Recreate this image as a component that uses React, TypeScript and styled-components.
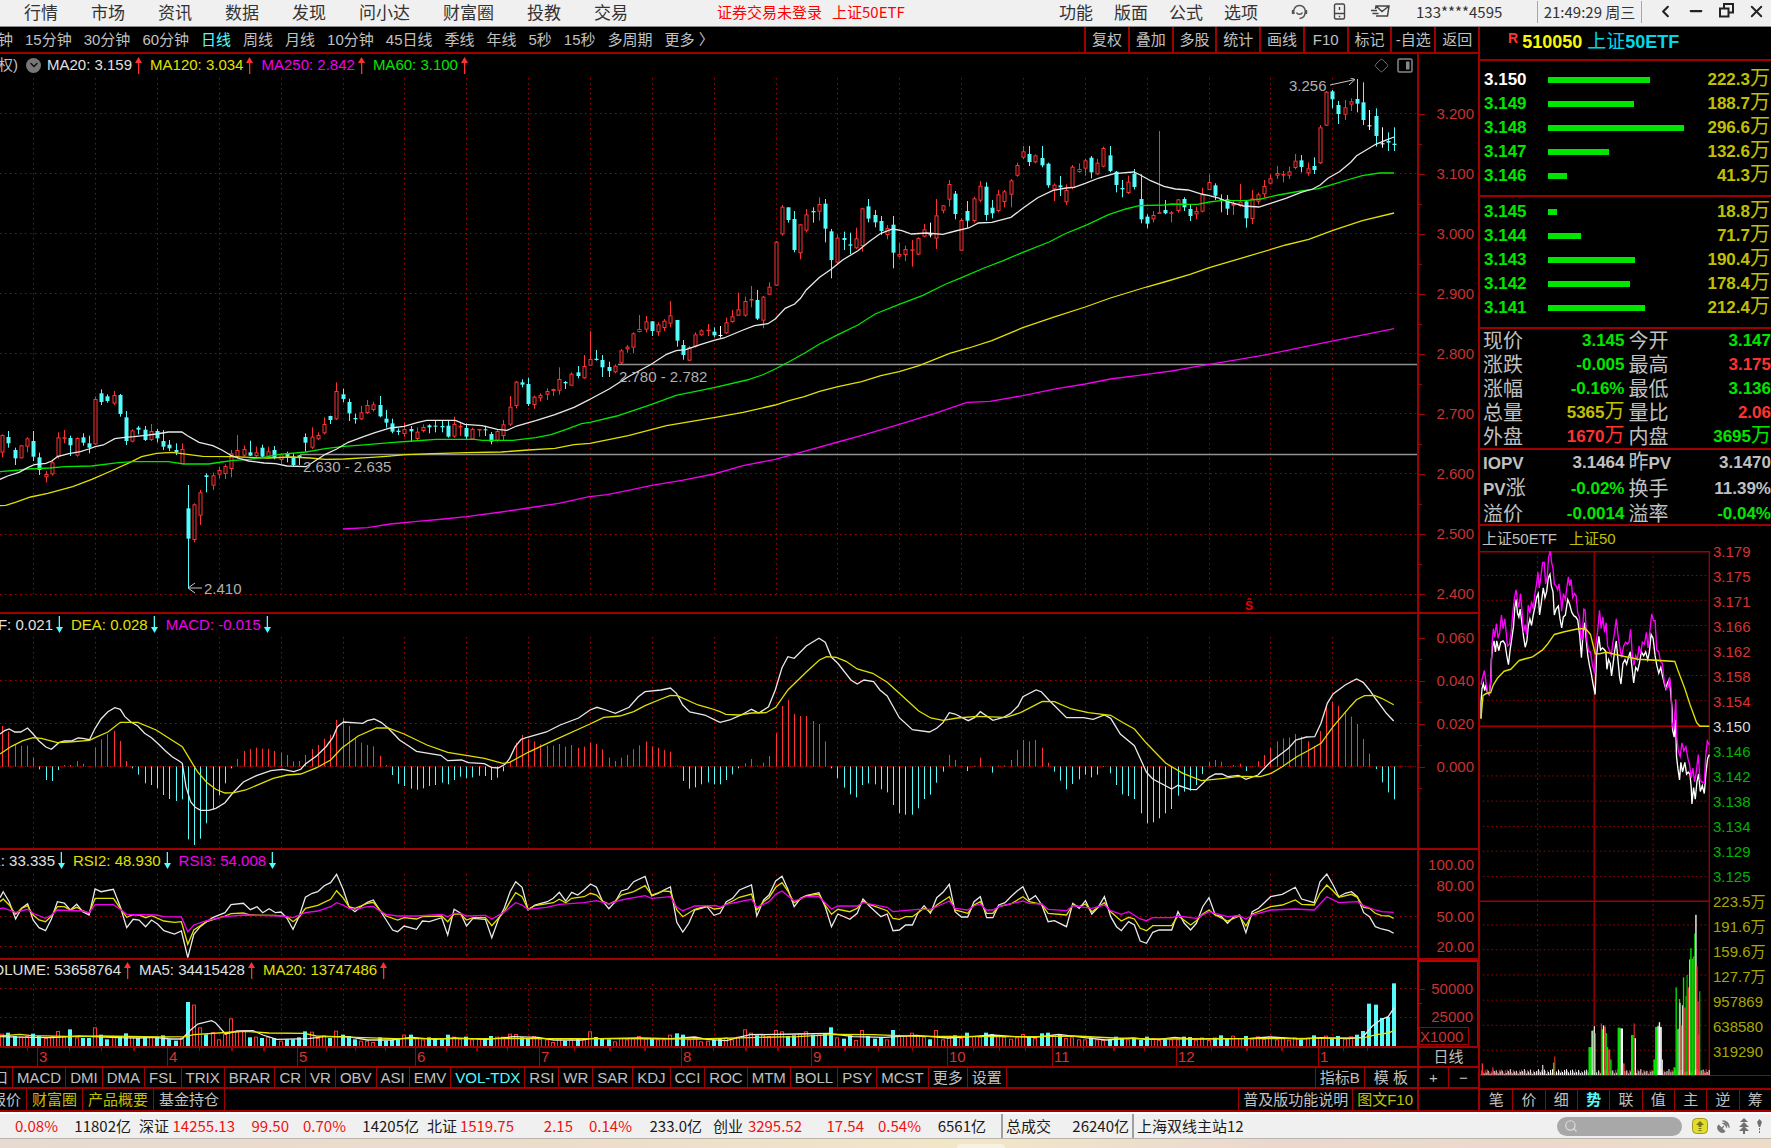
import React from "react";
import styled, { createGlobalStyle } from "styled-components";
import { ChevronLeft, Minus, X, Search, ChevronDown, Diamond, SatelliteDish } from "lucide-react";

const LINE = "#a00000";
const RED = "#ff3232";
const CYAN = "#54fcfc";
const GREEN = "#00e600";
const YELLOW = "#c0c000";
const MAGENTA = "#f000f0";
const GREY = "#c0c0c0";
const AXIS = 61;
const SIDE = 291;

const latin = `"Liberation Sans", "Noto Sans CJK SC", sans-serif`;
const ui = `"Noto Sans CJK SC", "Noto Sans", sans-serif`;

const Global = createGlobalStyle`
  * { box-sizing: border-box; }
  body { margin: 0; background: #000; overflow-x: hidden; }
  button, input { font: inherit; color: inherit; background: none; border: 0; padding: 0; margin: 0; }
  button { cursor: pointer; white-space: nowrap; }
  table { border-collapse: collapse; border-spacing: 0; }
  th, td { padding: 0; text-align: left; font-weight: inherit; }
`;

/* ---------- data ---------- */

type Section = { x: number; y: number; k: number; pts: string };

const A = { x: 0, y: 300, k: 2.6133 };
const B = { x: 590, y: 0, k: 2.6133 };
const B2 = { x: 590, y: 200, k: 2.6133 };
const C = { x: 1171, y: 0, k: 2.6133 };
const M1 = { x: 0, y: 600, k: 2.1778 };
const M2 = { x: 720, y: 600, k: 2.0632 };
const V1 = { x: 0, y: 940, k: 2.529 };
const V2 = { x: 600, y: 940, k: 2.529 };
const V3 = { x: 1151, y: 940, k: 2.529 };

const path = (sections: Section[]) =>
  sections
    .flatMap((s) =>
      s.pts.split(" ").map((p) => {
        const [px, py] = p.split(",").map(Number);
        return `${(s.x + px / s.k).toFixed(1)},${(s.y + py / 3).toFixed(1)}`;
      })
    )
    .join(" ");

const barX = (n: number) => 2.3 + 6.186 * n;

type Candle = { kind: string; high: number; low: number; top: number; bottom: number };

const readCandles = (base: number, text: string): Candle[] =>
  text
    .trim()
    .split(/\s*\|\s*/)
    .map((row) => {
      const [kind, ...v] = row.split(" ");
      const [high, low, top, bottom] = v.map((n) => base + Number(n) / 3);
      return { kind, high, low, top, bottom };
    });

const candles: Candle[] = [
  ...readCandles(300, `r 403 472 405 458|c 393 443 411 430|c 443 495 450 475|r 435 475 436 475|r 412 457 415 440|c 393 483 423 470|c 458 525 472 510|r 513 547 522 532|r 483 527 487 523|r 397 475 412 470|r 390 430 412 416|c 407 468 414 436|r 412 470 414 467|c 400 437 412 428|c 407 460 430 443|r 290 435 297 433|c 268 315 280 306|c 283 308 289 303|r 273 315 285 311|c 282 350 285 342|c 333 435 352 423|r 388 427 391 425|c 378 403 383 389|c 378 423 389 420|r 372 423 393 420|c 387 427 393 415|c 390 450 423 440|c 420 453 434 445|c 430 465 450 457|r 430 493 447 492|c 555 865 625 716|r 610 727 613 720|r 570 675 577 647|c 520 577 526 531|r 518 570 526 557|r 500 535 510 524|r 493 537 498 522|r 450 532 460 507|r 405 477 450 470|r 437 470 447 467|c 422 468 457 467|r 440 470 457 468|c 434 473 443 470|r 440 472 454 470|c 438 478 450 473|r 460 492 463 480|c 455 487 460 470|c 460 500 470 495|c 465 495 466 473|c 400 455 411 428|r 382 447 410 443|r 397 420 405 418|r 352 403 372 400|c 347 372 348 360|r 247 360 273 358|c 266 307 283 297|c 296 363 306 340|c 341 371 354 358|r 318 360 337 358|r 300 342 315 339|r 305 335 313 330|c 288 352 315 349|c 330 383 356 368|c 356 400 370 395|c 385 405 392 396|r 367 410 387 402|c 378 425 387 394|r 382 422 395 417|r 373 397 381 393|c 373 400 376 382|c 363 397 377 380|c 363 397 378 382|c 363 413 377 410|r 350 413 372 410|r 365 408 378 382|c 370 418 384 410|r 383 420 387 418|r 387 410 387 391|c 377 408 388 391|c 396 433 402 425|r 390 425 393 422|r 360 422 373 408|r 288 378 320 374|r 243 325 245 318|c 238 262 247 254|c 233 318 252 312|r 287 326 290 315|r 280 304 285 295|r 265 300 273 284|r 266 288 267 273|r 202 284 237 272|c 243 267 246 250|r 217 258 221 257|c 198 235 217 228|r 165 236 198 235|r 93 198 177 197|c 150 182 176 180`),
  ...readCandles(200, `c 465 531 480 502|c 485 531 501 513|r 493 520 497 517|r 447 492 451 490|r 435 458 440 448|r 397 460 400 443|r 345 397 387 396|r 348 397 364 389|c 363 408 364 393|r 367 407 373 397|r 357 393 362 384|r 303 382 346 371|c 360 440 360 422|c 420 479 435 465|r 438 483 442 482|r 397 443 403 440|r 388 407 391 406|r 372 408 389 391|c 382 412 395 406|w 378 413 405 407|r 353 402 367 400|r 330 368 349 366|r 278 347 328 347|r 290 350 303 347|r 258 322 297 300|c 270 360 300 356|r 288 385 290 362|r 247 285 260 284|r 123 258 125 257`),
  ...readCandles(0, `r 615 707 620 703|c 622 668 622 660|c 633 757 657 750|r 672 778 673 760|r 627 697 643 692|c 622 668 633 637|r 592 662 612 635|c 597 727 611 686|c 687 835 694 780|r 703 792 713 788|c 695 750 714 720|c 698 762 733 737|r 683 747 715 745|r 623 755 625 738|c 597 667 619 656|c 630 682 645 667|c 648 705 663 693|r 675 718 684 705|c 648 805 674 758|r 728 773 762 770|r 737 783 747 765|r 720 800 748 752|r 712 765 714 764|r 672 712 688 710|w 668 712 703 706|r 597 747 646 716|r 615 640 616 632|r 540 620 552 599|c 573 658 581 642|r 655 752 660 752|c 603 683 633 662|r 590 668 595 663|r 543 607 557 602|c 547 662 560 645|c 600 655 623 640|r 570 637 583 633|r 570 622 574 606|r 537 622 541 584|r 488 530 495 527|r 438 477 454 473|c 438 498 462 486|r 463 490 466 487|c 438 502 474 496|c 488 563 491 556|r 550 603 554 568|c 528 588 556 562|r 553 615 570 607|r 495 568 500 563|r 490 518 507 516|r 477 527 481 506|c 468 535 473 517|r 477 525 488 523|r 440 502 444 500|c 438 517 466 513|c 513 577 515 555|c 540 592 564 568|r 527 582 545 579|c 507 568 521 561|c 523 670 597 658|c 643 685 650 671|r 633 667 645 658|r 393 640 637 640|c 600 643 630 640|r 633 667 637 641|r 597 638 598 633|c 592 633 597 622|c 615 663 627 648|r 620 658 633 643|r 563 637 583 635|r 523 570 546 570|c 550 600 556 587|c 583 637 597 601|c 585 645 598 626|r 600 645 612 617|r 552 620 605 618|c 603 683 604 655|r 570 672 595 657|r 578 613 583 605|r 540 592 558 583|r 523 553 535 551|r 498 537 519 527|r 513 547 522 525|r 500 537 514 527|r 462 508 482 504|c 465 517 481 501|r 487 527 505 520|c 472 522 498 510|r 375 492 382 490|r 273 378 275 377|c 270 325 274 298|c 303 372 315 342|r 300 360 322 344|r 295 333 304 314|c 237 337 297 311|c 247 375 307 360|w 330 390 376 379|c 325 440 348 408|w 382 443 430 432|c 397 453 423 428|c 382 453 431 435`),
];

const ma20 = path([
  { ...A, pts: "0,538 20,528 50,517 72,503 90,494 120,490 135,483 150,470 180,461 210,455 232,447 249,440 270,435 300,416 320,413 350,410 380,406 409,402 440,396 475,396 490,407 520,427 556,437 580,450 605,467 630,477 650,483 690,489 720,491 750,498 800,500 830,478 850,463 880,447 910,427 950,410 980,398 1020,384 1056,379 1090,368 1115,361 1190,361 1215,373 1260,377 1300,388 1325,391 1350,378 1400,362 1450,344 1500,322 1540,299" },
  { ...B2, pts: "0,598 50,567 100,530 161,492 200,463 225,452 250,449 290,433 324,421 350,414 400,390 430,377 465,371 484,357 510,325 535,312 550,295 565,270 600,232 631,207 660,180 700,152 729,125 760,100 791,87" },
  { ...B, pts: "815,692 840,702 880,699 922,703 955,693 990,684 1015,669 1050,667 1100,652 1131,625 1170,593 1210,571 1245,564 1265,562 1294,550 1330,534 1370,521 1421,516 1438,525 1465,542 1500,559 1530,567" },
  { ...C, pts: "45,570 80,582 100,587 125,594 150,606 190,618 230,621 260,610 300,595 340,577 370,567 390,555 410,535 440,515 470,487 485,467 510,450 535,433 560,421 583,411" },
]);
const ma60 = path([
  { ...A, pts: "0,515 50,510 72,507 130,504 170,500 240,498 310,488 350,485 440,485 480,492 545,492 580,486 605,482 650,478 690,472 730,463 800,456 850,446 900,439 960,434 1020,428 1080,423 1140,418 1240,418 1260,421 1340,421 1400,413 1440,404 1480,388 1520,371" },
  { ...B2, pts: "0,667 70,648 161,613 225,586 324,563 410,540 450,525 484,507 520,485 560,460 600,432 648,404 700,375 745,342 808,313 870,286 930,252 971,233 1030,204 1080,182 1131,157 1200,126 1240,102 1300,74 1355,44 1400,27 1435,17 1500,15 1520,12" },
  { ...C, pts: "50,613 70,613 100,606 130,602 200,601 235,597 280,585 340,573 385,566 423,553 460,540 500,527 545,519 583,519" },
]);
const ma120 = path([
  { ...A, pts: "0,617 15,616 40,607 80,591 125,580 190,560 240,538 290,513 340,487 370,470 409,460 450,457 490,463 530,469 605,470 700,474 760,471 810,474 850,478 900,477 960,473 1010,469 1060,464 1130,461 1219,458 1310,456 1380,450 1450,445 1500,434" },
  { ...B2, pts: "0,730 100,707 200,677 324,653 400,637 484,615 520,602 560,590 600,574 648,560 710,545 760,527 808,515 860,497 940,460 990,444 1050,422 1131,383 1210,352 1294,321 1360,294 1454,261 1510,243" },
  { ...C, pts: "50,823 100,803 200,769 300,735 360,718 423,691 500,662 583,639" },
]);
const ma250 = path([
  { ...A, pts: "896,687 960,683 1020,672 1090,664 1160,657 1219,650 1310,636 1380,624 1460,610 1540,590" },
  { ...B2, pts: "0,890 45,884 100,871 161,856 240,841 324,822 400,797 484,778 550,757 648,726 720,703 808,673 900,641 985,607 1045,604 1131,587 1220,566 1294,552 1360,537 1454,523 1520,513 1568,503" },
  { ...C, pts: "240,1066 392,1030 583,986" },
]);

const macdEnds = "378 395 435 437 437 472 508 540 543 510 495 495 483 491 498 442 418 402 393 423 483 505 524 550 555 565 585 597 603 598 718 735 716 670 628 586 550 505 477 453 447 443 446 446 453 458 465 484 483 465 447 435 416 404 360 354 378 415 428 435 439 467 495 525 551 558 566 569 565 558 555 548 553 540 530 535 532 527 528 540 533 514 485 428 405 418 424 433 437 437 432 440 435 443 440 428 432 448 473 483 473 465 448 436 424 439 443 450 455 497 543 566 562 553 547 553 553 540 523 505 490 477 497 488 468 400 318 300 342 348 348 363 372 424 505 535 563 583 592 555 550 553 568 577 615 640 644 644 625 597 584 548 515 465 480 497 513 497 473 499 518 497 496 480 450 420 424 420 443 488 515 542 568 552 538 524 532 524 501 520 555 583 588 597 640 670 667 655 640 627 587 575 572 555 522 485 480 485 498 495 491 513 498 484 465 443 424 415 412 402 410 424 437 393 318 305 318 333 350 372 417 461 507 547 577 598"
  .split(" ")
  .map((v) => 600 + Number(v) / 3);

const dif = path([
  { ...M1, pts: "0,402 10,392 20,387 32,396 45,396 60,384 72,402 85,423 100,441 112,448 128,428 140,423 155,423 170,414 180,415 195,419 207,385 220,357 235,335 250,323 262,328 272,350 285,366 300,378 315,400 330,413 345,432 360,452 375,470 390,483 397,490 405,560 415,605 425,622 437,631 455,631 470,625 490,608 505,582 530,546 560,526 590,512 615,508 640,515 655,508 665,492 690,467 710,440 725,412 735,380 748,366 790,370 800,362 815,357 830,367 845,384 860,405 870,420 890,438 907,454 960,466 975,482 1005,480 1020,488 1055,491 1070,502 1085,504 1100,493 1110,475 1122,440 1135,418 1150,411 1190,396 1220,375 1260,354 1285,330 1300,322 1320,330 1340,340 1370,322 1390,290 1405,275 1440,270 1460,264 1473,280 1487,315 1502,336 1535,345 1560,362" },
  { ...M2, pts: "0,367 20,360 45,344 65,328 80,339 100,320 114,270 128,203 140,170 153,175 178,138 204,115 217,127 230,172 243,190 270,240 283,252 297,240 317,245 330,270 345,288 370,353 397,389 432,396 447,385 460,368 473,338 485,342 512,362 525,353 537,335 563,361 585,352 600,340 615,318 625,290 652,270 663,275 680,302 715,353 750,353 770,358 793,345 806,355 826,402 855,437 870,485 880,517 893,537 932,567 945,556 970,568 983,569 1009,532 1022,522 1036,522 1047,530 1070,526 1085,538 1110,525 1135,487 1173,445 1188,420 1210,411 1227,410 1240,370 1253,310 1265,282 1290,255 1313,237 1327,247 1340,270 1353,297 1375,340 1390,363" },
]);
const dea = path([
  { ...M1, pts: "0,462 25,439 50,422 72,413 90,415 125,428 150,426 195,421 207,413 235,396 262,367 300,367 340,390 380,425 397,440 410,470 430,515 450,547 470,568 490,579 510,578 535,570 595,535 625,525 655,522 690,503 720,480 745,443 780,408 820,384 845,384 880,402 930,435 975,457 1055,475 1095,490 1110,487 1150,457 1200,425 1285,372 1315,352 1350,348 1380,335 1405,317 1440,297 1460,286 1475,287 1520,315 1545,324" },
  { ...M2, pts: "0,335 12,343 40,345 65,339 95,338 115,322 140,270 178,216 205,180 220,170 240,172 260,184 283,207 315,220 345,247 370,280 410,333 435,354 460,361 490,354 530,349 590,352 620,338 665,304 690,305 725,327 760,338 806,346 830,367 855,387 880,430 920,490 955,520 993,542 1040,535 1070,529 1115,530 1137,520 1160,500 1190,470 1215,451 1240,430 1265,380 1300,320 1313,299 1330,287 1350,286 1365,295 1390,314" },
]);

const rsi1 = path([
  { ...M1, pts: "0,893 7,875 20,905 34,957 47,925 60,911 72,960 85,983 99,992 112,957 125,905 140,909 153,930 167,913 180,935 194,945 207,867 220,875 247,868 262,920 276,983 290,958 303,960 317,980 330,960 343,972 357,992 380,1002 395,993 409,1073 422,1003 436,980 450,965 463,953 490,938 503,914 530,910 545,929 560,920 572,938 586,926 600,938 612,936 625,955 638,988 652,947 665,892 680,880 692,875 706,857 720,848 733,823 747,867 760,920 773,935 788,918 800,907 813,900 827,930 841,960 855,990 866,995 880,978 907,988 920,963 935,965 962,953 975,1005 989,928 1003,940 1016,978 1030,955 1057,958 1071,1013 1085,960 1098,925 1111,875 1123,845 1137,862 1150,930 1165,915 1192,905 1205,895 1218,877 1232,903 1245,877 1258,885 1272,870 1286,852 1299,862 1312,903 1326,926 1340,905 1353,873 1367,867 1380,845 1405,829 1419,888 1433,880 1446,870 1460,861 1474,967 1487,996 1500,970 1513,930 1540,920 1555,946" },
  { ...M2, pts: "0,940 13,905 26,895 40,870 65,855 76,948 90,900 101,885 115,843 128,829 140,868 153,920 166,895 178,887 204,878 217,920 230,980 243,942 268,958 283,940 295,897 308,918 332,950 345,942 357,992 370,990 383,975 397,975 408,940 421,917 434,940 447,893 460,877 473,853 485,935 498,951 511,951 524,905 537,890 550,953 563,953 575,915 588,908 600,890 613,873 625,860 638,900 651,887 664,915 677,965 690,962 715,980 728,910 741,925 754,902 767,942 780,922 793,890 806,950 818,980 828,992 843,965 855,975 867,1023 880,1030 893,997 906,990 932,990 945,935 958,970 971,990 983,970 996,920 1009,893 1022,945 1035,950 1047,970 1060,950 1072,945 1085,998 1098,935 1111,925 1123,908 1136,890 1160,883 1187,862 1200,897 1226,908 1238,845 1252,822 1265,855 1277,890 1290,880 1303,875 1315,890 1328,938 1340,950 1352,980 1365,987 1380,992 1390,1000" },
]);
const rsi2 = path([
  { ...M1, pts: "0,905 7,897 20,915 34,943 47,925 60,917 72,945 85,960 99,965 112,948 125,920 140,920 153,930 167,922 180,932 194,940 207,895 247,895 262,925 276,952 290,944 303,945 317,953 330,947 357,963 380,967 395,965 409,1033 422,990 450,965 490,948 503,941 530,939 545,945 600,946 625,950 638,965 652,950 665,925 692,916 720,898 733,872 747,893 760,920 773,925 800,910 813,907 827,930 841,948 866,960 880,953 907,957 920,950 962,948 975,965 989,942 1003,942 1016,960 1030,953 1057,953 1071,977 1098,935 1111,905 1123,878 1137,890 1150,928 1165,917 1205,908 1218,898 1232,908 1245,895 1272,890 1286,880 1299,885 1312,903 1326,912 1340,903 1353,885 1380,875 1405,857 1419,885 1446,873 1460,875 1474,930 1487,950 1513,928 1540,918 1555,927" },
  { ...M2, pts: "0,925 13,912 26,903 40,892 65,882 76,930 90,905 101,893 115,862 128,848 140,873 153,908 178,887 204,883 217,915 230,943 243,928 268,935 283,925 295,903 308,913 345,932 357,955 370,958 383,950 397,950 421,925 434,935 447,915 473,890 485,930 511,940 524,915 537,905 550,940 563,940 575,920 600,912 625,890 638,905 664,913 677,940 715,945 728,915 741,920 754,912 767,935 793,908 806,935 828,963 843,952 855,957 867,985 880,992 893,977 932,977 945,947 971,975 983,962 996,942 1009,930 1022,945 1047,963 1072,948 1085,978 1098,942 1136,920 1160,915 1187,900 1200,913 1226,915 1238,880 1252,855 1265,873 1277,892 1303,883 1315,892 1328,922 1340,925 1352,940 1365,947 1380,948 1390,955" },
]);
const rsi3 = path([
  { ...M1, pts: "0,926 7,924 34,937 60,928 72,940 99,955 112,945 125,930 180,933 194,938 207,914 247,914 262,928 276,943 340,945 357,950 395,951 409,995 422,975 450,962 490,950 530,945 612,948 638,953 665,938 692,933 720,920 733,908 747,915 760,925 773,929 800,920 813,919 827,933 841,943 866,948 907,948 962,943 975,950 989,940 1003,940 1016,948 1057,946 1071,957 1098,936 1123,908 1137,915 1150,928 1190,922 1218,913 1272,908 1299,902 1326,912 1353,900 1380,893 1405,887 1419,895 1460,890 1474,922 1487,932 1513,918 1560,917" },
  { ...M2, pts: "0,922 13,913 65,898 76,922 101,905 115,883 128,873 153,903 178,890 204,890 217,908 230,927 243,918 283,918 295,908 345,922 357,935 408,928 434,928 473,903 485,925 511,930 524,918 537,912 550,930 563,930 575,920 625,903 638,910 664,912 677,928 715,932 728,917 767,925 793,915 806,932 828,943 843,935 867,957 880,962 893,953 932,953 945,948 983,955 1009,935 1047,950 1072,947 1085,957 1098,945 1136,930 1187,927 1226,930 1238,912 1252,890 1277,908 1315,905 1328,917 1352,930 1365,935 1390,937" },
]);

const volumeHead = [
  37, 40, 30, 28, 30, 37, 30, 24, 30, 45, 28, 50, 26, 24, 24, 56, 34, 20, 27, 28, 38, 28, 24, 28, 28, 28, 32, 20, 16, 26, 132, 124, 56, 35, 42, 20, 37, 83, 44, 48, 26, 28, 24, 28, 24, 16, 20, 20, 26, 44, 43, 24, 32, 24, 46, 34, 30, 20, 16, 16, 12, 26, 16, 18, 20, 34, 34, 26, 20, 26, 20, 20, 34, 28, 22, 28, 20, 22, 20, 30, 28, 28, 37, 36, 26, 24, 30, 22, 20, 12, 24, 16, 20, 24, 20, 44, 27,
  24, 20, 14, 24, 20, 24, 30, 22, 22, 20, 20, 34, 38, 34, 20, 24, 14, 16, 18, 24, 26, 20, 28, 50, 40, 32, 34, 30, 48, 44, 30, 32, 38, 44, 34, 34, 38, 56, 26, 22, 32, 18, 48, 30, 22, 26, 20, 48, 32, 30, 40, 32, 28, 20, 48, 20, 26, 32, 24, 40, 30, 28, 40, 36, 30, 28, 22, 26, 36, 28, 24, 38, 40, 34, 36, 24, 26, 20, 20, 26, 20, 18, 18, 28, 24, 20, 24, 18, 28, 24, 18, 22, 20, 20, 28,
];
const volumeTail = [34, 45, 127, 124, 84, 87, 188];
const volumes = candles.map((_, n) => {
  const fromEnd = n - (candles.length - volumeTail.length);
  if (fromEnd >= 0) return volumeTail[fromEnd];
  return volumeHead[n] ?? 18 + ((n * 7) % 15);
});
const volMa5 = path([
  { ...V1, pts: "0,290 80,292 130,293 200,288 300,293 350,294 390,292 430,297 460,297 480,272 500,252 535,242 545,248 570,282 600,273 640,272 665,285 700,298 780,296 820,290 880,290 930,300 990,300 1040,292 1100,298 1150,294 1230,298 1300,290 1360,292 1400,300 1470,300 1500,295" },
  { ...V2, pts: "0,296 100,294 180,296 240,291 270,298 320,302 350,292 380,284 500,282 580,280 640,290 720,292 800,286 880,294 940,290 990,285 1050,290 1100,292 1160,283 1220,292 1280,300 1350,294 1380,298" },
  { ...V3, pts: "20,298 60,292 100,297 250,295 300,291 380,297 430,293 500,296 535,292 560,258 583,238 600,230 615,203" },
]);
const volMa20 = path([
  { ...V1, pts: "0,288 50,283 80,287 200,290 250,288 400,291 470,290 490,284 590,276 620,274 680,279 770,280 800,288 900,292 1000,296 1100,296 1300,296 1500,296" },
  { ...V2, pts: "0,296 250,297 400,292 500,290 600,283 690,284 800,289 900,289 1000,290 1100,290 1200,288 1300,294 1390,297" },
  { ...V3, pts: "20,297 250,296 430,295 540,293 570,284 600,279 615,271" },
]);

/* ---------- top menu ---------- */

const Page = styled.div`
  min-height: 100vh;
  display: flex;
  flex-direction: column;
  font: 15px/20px ${latin};
  color: ${GREY};
  background: #000;
`;

const MenuBar = styled.header`
  height: 27px;
  display: flex;
  align-items: center;
  padding-bottom: 3px;
  background: #f0f0f0;
  color: #333;
  border-bottom: 1px solid #8c8c8c;
  font-family: ${ui};
  line-height: 22px;
`;
const MenuGroup = styled.nav<{ $gap: number; $inset?: number }>`
  display: flex;
  gap: ${(p) => p.$gap}px;
  padding-left: ${(p) => p.$inset ?? 0}px;
  font-size: 17px;
`;
const Login = styled.button`
  color: #f00;
  margin: 0 auto 0 89px;
  display: flex;
  gap: 10px;
`;
const MenuIcons = styled.div`
  display: flex;
  gap: 23px;
  margin: 0 26px 0 33px;
  color: #444;
  button { display: flex; }
`;
const Account = styled.span`
  width: 121px;
  flex: none;
`;
const Clock = styled.time`
  border: solid #a8a8a8;
  border-width: 0 1px;
  width: 105px;
  text-align: center;
  white-space: nowrap;
`;
const WindowButtons = styled.div`
  display: flex;
  width: 129px;
  padding: 0 5px 0 14px;
  justify-content: space-between;
  color: #222;
  button { display: flex; }
`;

/* ---------- workspace ---------- */

const Workspace = styled.main`
  display: flex;
  min-width: 0;
`;
const Left = styled.section`
  flex: 1;
  min-width: 0;
  overflow: hidden;
  border-right: 2px solid ${LINE};
`;
const Toolbar = styled.div`
  height: 27px;
  display: flex;
  border-bottom: 2px solid ${LINE};
  overflow: hidden;
`;
const Periods = styled.div`
  flex: 1;
  display: flex;
  gap: 12px;
  align-items: center;
  min-width: 0;
`;
const TextButton = styled.button<{ $color?: string }>`
  color: ${(p) => p.$color ?? GREY};
`;
const ClippedButton = styled(TextButton)`
  width: 13px;
  display: flex;
  justify-content: flex-end;
`;
const Tools = styled.div`
  width: 394px;
  display: flex;
  flex: none;
`;
const Tool = styled.button`
  flex: 1;
  border-left: 2px solid ${LINE};
`;

const Pane = styled.div<{ $h: number }>`
  display: flex;
  height: ${(p) => p.$h}px;
  border-bottom: 2px solid ${LINE};
`;
const Plot = styled.div`
  flex: 1;
  min-width: 0;
  position: relative;
  overflow: hidden;
`;
const Legend = styled.div<{ $h: number }>`
  height: ${(p) => p.$h}px;
  padding-bottom: 2px;
  display: flex;
  align-items: center;
  white-space: nowrap;
`;
const LegendItem = styled.span<{ $color: string; $clip?: number }>`
  color: ${(p) => p.$color};
  display: flex;
  align-items: center;
  gap: 3px;
  margin-right: 8px;
  svg { flex: none; }
  ${(p) => p.$clip && `width: ${p.$clip}px; justify-content: flex-end; flex: none;`}
`;
const LegendTools = styled.div`
  margin: 0 4px 0 auto;
  display: flex;
  align-items: center;
  gap: 8px;
  color: #777;
  button { display: flex; }
`;
const Fold = styled.button`
  width: 15px;
  height: 15px;
  border-radius: 50%;
  background: #777;
  color: #111;
  display: flex;
  align-items: center;
  justify-content: center;
  margin-right: 6px;
`;
const Drawing = styled.svg<{ $h: number }>`
  display: block;
  width: 100%;
  height: ${(p) => p.$h}px;
`;
const Note = styled.span<{ $x: number; $y: number; $color?: string; $small?: boolean }>`
  position: absolute;
  left: ${(p) => (p.$x / 1417) * 100}%;
  top: ${(p) => p.$y}px;
  color: ${(p) => p.$color ?? "#b0b0b0"};
  ${(p) => p.$small && "font-size: 12px; font-weight: bold;"}
`;
const Axis = styled.div<{ $top?: number; $boxed?: boolean }>`
  width: ${AXIS}px;
  flex: none;
  border-left: 2px solid ${LINE};
  padding-top: ${(p) => p.$top ?? 0}px;
  color: #c83232;
  overflow: hidden;
  ${(p) => p.$boxed && `border: 2px solid #c00000; border-right-width: 1px; border-bottom: 0;`}
`;
const AxisLabel = styled.div<{ $h: number; $plain?: boolean }>`
  position: relative;
  height: ${(p) => p.$h}px;
  line-height: ${(p) => p.$h}px;
  padding-right: 4px;
  text-align: right;
  &::before, &::after {
    content: "";
    position: absolute;
    left: 0;
    height: 1px;
    background: ${LINE};
    display: ${(p) => (p.$plain ? "none" : "block")};
  }
  &::before { top: 50%; width: 6px; }
  &::after { top: 100%; width: 3px; }
`;
const Unit = styled.div`
  border: 1px solid ${LINE};
  width: 50px;
  height: 18px;
  line-height: 17px;
  margin-top: -4px;
`;

const TimeRow = styled.div`
  height: 20px;
  display: flex;
  border-bottom: 2px solid ${LINE};
`;
const Months = styled.div`
  flex: 1;
  display: grid;
  grid-template-columns: 37fr 130fr 130fr 118fr 124fr 142fr 130fr 136fr 105fr 124fr 142fr 99fr;
  min-width: 0;
`;
const Month = styled.span<{ $open?: boolean }>`
  border-left: ${(p) => (p.$open ? 0 : 1)}px solid ${LINE};
  padding-left: 1px;
  color: #d83232;
  line-height: 18px;
  background: linear-gradient(90deg, transparent 24%, ${LINE} 24% 25%, transparent 25% 49%, ${LINE} 49% 50%, transparent 50% 74%, ${LINE} 74% 75%, transparent 75%) 0 0 / 100% 3px no-repeat;
`;
const AxisCell = styled.div`
  width: ${AXIS}px;
  flex: none;
  border-left: 2px solid ${LINE};
  display: flex;
  justify-content: center;
  align-items: center;
`;
const TabRow = styled.div<{ $h: number }>`
  height: ${(p) => p.$h}px;
  display: flex;
  border-bottom: 2px solid ${LINE};
  overflow: hidden;
`;
const Tab = styled.button<{ $color?: string; $clip?: number; $wide?: boolean }>`
  color: ${(p) => p.$color ?? GREY};
  border-right: 1px solid ${LINE};
  padding: 0 ${(p) => (p.$wide ? 9 : 4)}px;
  flex: none;
  ${(p) => p.$clip && `width: ${p.$clip}px; display: flex; align-items: center; justify-content: flex-end;`}
`;
const QuoteTab = styled(Tab)`
  padding: 0 5px;
`;
const TabsRight = styled.div`
  margin-left: auto;
  display: flex;
  button { border-left: 1px solid ${LINE}; border-right: 0; }
`;
const Zoom = styled.button`
  flex: 1;
  & + & { border-left: 1px solid ${LINE}; }
`;

/* ---------- quote panel ---------- */

const Side = styled.aside`
  width: ${SIDE}px;
  flex: none;
  display: flex;
  flex-direction: column;
`;
const Title = styled.h1`
  height: 34px;
  margin: 0;
  border-bottom: 2px solid ${LINE};
  display: flex;
  align-items: center;
  padding: 2px 0 4px 28px;
  font-size: 18px;
  line-height: 24px;
  color: #00d8e8;
  sup { color: ${RED}; font-size: 14px; align-self: flex-start; margin-right: 4px; line-height: 18px; }
  b { color: #f8f800; margin-right: 5px; }
  span { font-weight: normal; font-size: 19px; }
`;
const Block = styled.div<{ $pad: string; $h: number }>`
  padding: ${(p) => p.$pad};
  height: ${(p) => p.$h}px;
  border-bottom: 2px solid ${LINE};
`;
const Book = styled.table`
  width: 100%;
  table-layout: fixed;
  font-weight: bold;
  font-size: 17px;
  line-height: 24px;
  tr { height: 24px; }
  th { width: 68px; padding-left: 4px; }
  td:last-child { width: 82px; text-align: right; color: ${YELLOW}; padding-right: 1px; }
`;
const Meter = styled.div`
  height: 6px;
  background: ${GREEN};
`;
const Wan = styled.span`
  font-weight: normal;
  font-size: 20px;
  line-height: 20px;
`;
const Price = styled.th<{ $color: string }>`
  color: ${(p) => p.$color};
`;
const Quotes = styled.table`
  width: 100%;
  table-layout: fixed;
  font-size: 17px;
  line-height: 24px;
  tr { height: 24px; }
  th { width: 53px; padding-left: 3px; font-size: 20px; white-space: nowrap; }
  th b { font-size: 17px; }
`;
const Value = styled.td<{ $color: string }>`
  font-weight: bold;
  text-align: right;
  white-space: nowrap;
  color: ${(p) => p.$color};
  &:nth-child(2) { padding-right: 1px; }
`;
const MiniTitle = styled.div`
  height: 25px;
  display: flex;
  align-items: center;
  gap: 12px;
  padding-left: 2px;
  button:last-child { color: ${YELLOW}; }
`;
const Mini = styled.div`
  display: flex;
  height: 525px;
  border-bottom: 1px solid ${LINE};
`;
const MiniPlot = styled.div`
  flex: 1;
  min-width: 0;
`;
const MiniScale = styled.div`
  width: 61px;
  margin-top: -12px;
  padding-left: 3px;
`;
const MiniLabel = styled.div<{ $color: string }>`
  color: ${(p) => p.$color};
  height: 25px;
  line-height: 25px;
  white-space: nowrap;
`;
const SideTabs = styled.div`
  margin-top: auto;
  height: 24px;
  border: solid ${LINE};
  border-width: 2px 0 2px;
  display: grid;
  grid-template-columns: repeat(9, 1fr);
`;
const SideTab = styled.button<{ $on?: boolean }>`
  color: ${(p) => (p.$on ? CYAN : GREY)};
  font-weight: ${(p) => (p.$on ? "bold" : "normal")};
  & + & { border-left: 1px solid ${LINE}; }
`;

/* ---------- status bar ---------- */

const Status = styled.footer`
  height: 27px;
  background: #f0f0f0;
  border-top: 2px solid #fff;
  border-bottom: 1px solid #b8b4a8;
  color: #1a1a1a;
  font-family: ${ui};
  display: flex;
  align-items: center;
  line-height: 24px;
  white-space: nowrap;
  overflow: hidden;
`;
const Field = styled.span<{ $w: number; $up?: boolean; $left?: boolean }>`
  width: ${(p) => p.$w}px;
  flex: none;
  text-align: ${(p) => (p.$left ? "left" : "right")};
  color: ${(p) => (p.$up ? "#f01010" : "inherit")};
`;
const Fields = styled.div`
  display: flex;
  margin-right: 15px;
`;
const Divided = styled.span`
  border-left: 2px solid #a0a0a0;
  padding: 0 3px;
  display: flex;
`;
const StatusRight = styled.div`
  margin-left: auto;
  width: 214px;
  display: flex;
  align-items: center;
  gap: 8px;
  color: #777;
  button { display: flex; }
`;
const SearchBox = styled.label`
  width: 125px;
  height: 19px;
  border-radius: 10px;
  background: #a8a8a8;
  color: #ddd;
  display: flex;
  align-items: center;
  padding-left: 7px;
  margin-right: 2px;
  input { width: 90px; height: 17px; outline: 0; }
`;
const Desktop = styled.div`
  flex: 1;
  min-height: 10px;
  background: linear-gradient(90deg, #e8dad2, #ecdccb 30%, #f2e6c8 55%, #ead8cf 72%, #ecdcc8);
  display: flex;
  justify-content: center;
  align-items: flex-end;
  padding-left: 190px;
  &::after { content: ""; width: 48px; height: 5px; border-radius: 4px 4px 0 0; background: #f8f0e4; }
`;

/* ---------- pieces ---------- */

const Arrow = ({ up }: { up?: boolean }) => (
  <svg width="7" height="17" viewBox="0 0 7 17" aria-hidden="true">
    <g fill={up ? RED : CYAN} transform={up ? undefined : "rotate(180 3.5 8.5)"}>
      <path d="M3.5 0 7 6H0z" />
      <rect x="3" y="4" width="1.3" height="13" />
    </g>
  </svg>
);

const gridX = Array.from({ length: 22 }, (_, k) => barX(5 + 10 * k));

const Grid = ({ top, bottom, rows }: { top: number; bottom: number; rows: number[] }) => (
  <g stroke="#a80000" strokeDasharray="1.5 3.5" strokeWidth="1">
    {gridX.map((x) => (
      <line key={x} x1={Math.round(x) + 0.5} x2={Math.round(x) + 0.5} y1={top} y2={bottom} />
    ))}
    {rows.map((y) => (
      <line key={y} x1="0" x2="1417" y1={y + 0.5} y2={y + 0.5} />
    ))}
  </g>
);

const Curve = ({ points, color }: { points: string; color: string }) => (
  <polyline points={points} fill="none" stroke={color} strokeWidth="1.3" />
);

const tint = (kind: string) => (kind === "r" ? RED : kind === "c" ? CYAN : "#fff");

const CandleMark = ({ candle, n }: { candle: Candle; n: number }) => {
  const { kind, high, low, top, bottom } = candle;
  const x = Math.round(barX(n));
  const color = tint(kind);
  const h = Math.max(bottom - top, 1);
  return (
    <g>
      <rect x={x} y={high} width="1" height={low - high} fill={color} />
      {kind === "r" ? (
        <rect x={x - 1} y={top + 0.5} width="3" height={Math.max(h - 1, 0.5)} fill="#000" stroke={color} />
      ) : (
        <rect x={x - 1.5} y={top} width="4" height={h} fill={color} />
      )}
    </g>
  );
};

const VolumeMark = ({ kind, height, n }: { kind: string; height: number; n: number }) => {
  const x = Math.round(barX(n));
  const h = height / 3;
  return kind === "r" ? (
    <rect x={x - 1.5} y={1046.5 - h} width="3" height={h} fill="#000" stroke={RED} />
  ) : (
    <rect x={x - 2} y={1046 - h} width="4" height={h} fill={CYAN} />
  );
};

const miniWhite = "31,462 31,420 34,385 38,372 42,390 46,375 50,395 55,400 60,370 62,310 66,275 70,262 74,290 78,262 84,287 90,265 97,262 103,270 108,300 113,323 118,285 123,255 128,225 132,175 136,155 140,190 144,200 148,180 153,215 158,250 163,278 168,262 172,225 177,205 182,222 187,195 192,175 197,150 202,140 206,195 211,165 217,125 222,150 227,135 232,100 237,90 241,120 246,135 250,195 255,180 262,172 267,205 272,228 277,200 283,195 290,155 296,168 302,188 308,197 314,200 320,208 326,250 331,305 336,240 341,215 346,265 350,300 355,325 360,345 365,370 372,400 376,300 383,250 388,285 394,280 400,285 404,290 407,335 412,310 417,320 421,352 426,318 430,290 435,262 440,310 445,355 449,373 455,320 461,310 466,322 471,305 477,290 482,330 487,370 493,330 499,338 504,320 510,290 517,300 523,290 529,310 534,290 539,245 545,255 551,300 556,325 562,345 568,330 573,352 578,370 583,385 588,370 594,360 598,400 602,440 603,490 608,510 612,465 615,560 619,590 624,620 628,575 633,600 640,575 645,605 650,600 655,605 659,640 661,682 666,640 671,670 676,625 681,605 686,650 692,635 698,655 703,600 708,565 713,555";
const miniMagenta = "31,375 36,355 41,338 46,370 51,395 56,400 61,350 64,270 68,230 72,252 77,217 82,255 87,240 92,195 97,230 102,205 106,238 110,275 116,270 121,240 126,190 131,150 136,130 140,160 144,175 149,140 154,190 158,240 163,220 167,247 172,170 177,190 182,160 187,180 192,140 197,115 201,85 205,125 210,95 215,60 220,60 224,115 229,95 233,45 238,30 242,60 246,75 250,115 255,120 260,130 264,115 270,160 272,185 277,140 283,155 288,120 292,97 296,120 300,103 305,150 310,140 315,145 320,190 325,200 329,250 333,260 338,180 342,182 347,260 353,290 358,290 364,325 371,345 374,270 379,240 385,183 390,230 395,200 400,240 405,215 409,275 414,285 420,300 425,265 430,240 435,205 440,245 445,275 451,305 457,275 463,265 468,270 473,265 478,232 483,300 488,325 493,300 498,310 503,275 508,295 513,265 519,270 525,240 530,280 535,240 541,192 546,210 551,210 556,285 562,290 567,315 573,320 578,365 584,385 590,380 594,355 599,385 601,470 606,490 610,450 613,412 615,500 620,545 626,560 631,525 637,545 643,535 649,565 654,580 659,615 664,590 669,625 674,600 680,555 685,620 690,625 698,628 702,560 707,520 713,530";
const miniYellow = "31,462 37,403 45,398 60,395 68,375 80,358 100,340 120,335 145,312 185,303 215,285 230,270 250,245 280,238 325,230 345,232 358,245 372,295 385,295 405,291 430,296 460,302 500,309 560,312 610,315 618,335 640,385 655,425 675,472 685,482 713,482";
const miniRows = [93, 157, 222, 286, 351, 415, 546, 610, 675, 740, 804, 869, 994, 1058, 1123, 1188, 1253, 1317];

const miniBars: [number, number, number, string][] = [
  [352, 9, 72, "#00e600"], [361, 4, 114, "#fff"], [365, 3, 116, "#00e600"], [368, 3, 126, "#fff"], [371, 3, 108, "#00e600"],
  [389, 3, 133, RED], [392, 4, 118, "#00e600"], [395, 4, 128, "#fff"], [399, 5, 125, RED], [403, 4, 108, "#00e600"], [407, 4, 72, "#00e600"], [411, 6, 66, RED], [417, 4, 40, "#00e600"],
  [439, 9, 122, "#00e600"], [448, 7, 120, "#fff"], [455, 5, 30, RED],
  [479, 8, 103, "#00e600"], [487, 3, 133, RED], [490, 4, 95, "#fff"],
  [546, 5, 40, "#00e600"], [551, 7, 124, "#00e600"], [558, 4, 126, "#fff"], [562, 4, 136, "#fff"], [566, 5, 124, "#fff"], [571, 3, 40, "#fff"],
  [606, 6, 20, "#00e600"], [612, 4, 226, "#00e600"], [616, 5, 118, "#00e600"], [621, 2, 120, "#fff"], [622, 4, 196, "#00e600"], [624, 3, 186, "#fff"], [627, 4, 128, RED], [631, 3, 180, "#fff"], [634, 4, 252, "#00e600"], [638, 4, 174, RED], [642, 3, 204, "#00e600"], [645, 3, 258, "#00e600"], [648, 5, 226, RED], [653, 3, 298, "#fff"], [656, 4, 327, "#00e600"], [660, 4, 300, "#00e600"], [664, 4, 306, RED], [668, 3, 365, "#00e600"], [671, 4, 413, "#fff"], [674, 4, 280, RED], [677, 4, 190, RED], [680, 3, 105, RED], [683, 3, 216, "#00e600"],
  [214, 3, 26, "#fff"], [250, 3, 48, RED], [246, 4, 32, "#00e600"], [33, 4, 30, RED], [65, 3, 20, RED],
];
const palette = [RED, "#fff", "#00e600", RED, "#00e600", "#fff", RED];

const MiniChart = () => (
  <Drawing $h={524} viewBox="28 30 687 1351" preserveAspectRatio="none" role="img" aria-label="分时走势">
    <g stroke="#a80000" strokeWidth="2.5" strokeDasharray="5 8">
      {miniRows.map((y) => <line key={y} x1="36" x2="714" y1={y} y2={y} />)}
      {[200, 545].map((x) => <line key={x} x1={x} x2={x} y1="30" y2="1381" />)}
    </g>
    <g stroke={LINE} strokeWidth="4" fill="none">
      <path d="M28 32H714M28 482H714M28 933H714M369 30V1381M713 30V1381" />
    </g>
    {Array.from({ length: 228 }, (_, i) => {
      const h = 3 + ((i * 37 + (i % 5) * 11) % 13);
      return <rect key={i} x={30 + i * 3} y={1381 - h} width="3" height={h} fill={palette[(i * 5 + Math.floor(i / 4)) % 7]} />;
    })}
    {miniBars.map(([x, w, h, fill], i) => <rect key={i} x={x} y={1381 - h} width={w} height={h} fill={fill} />)}
    <g fill="none" strokeWidth="4">
      <polyline points={miniWhite} stroke="#fff" />
      <polyline points={miniMagenta} stroke="#ff00ff" />
      <polyline points={miniYellow} stroke="#e0e000" />
    </g>
  </Drawing>
);

const asks: [string, number][] = [["3.150", 222.3], ["3.149", 188.7], ["3.148", 296.6], ["3.147", 132.6], ["3.146", 41.3]];
const bids: [string, number][] = [["3.145", 18.8], ["3.144", 71.7], ["3.143", 190.4], ["3.142", 178.4], ["3.141", 212.4]];

const BookTable = ({ rows }: { rows: [string, number][] }) => (
  <Book>
    <tbody>
      {rows.map(([price, amount]) => (
        <tr key={price}>
          <Price scope="row" $color={price === "3.150" ? "#fff" : GREEN}>{price}</Price>
          <td><Meter style={{ width: `${amount / 3.08}%` }} /></td>
          <td>{amount.toFixed(1)}<Wan>万</Wan></td>
        </tr>
      ))}
    </tbody>
  </Book>
);

type Cell = [string, string, string];
const dayQuotes: [Cell, Cell][] = [
  [["现价", "3.145", GREEN], ["今开", "3.147", GREEN]],
  [["涨跌", "-0.005", GREEN], ["最高", "3.175", RED]],
  [["涨幅", "-0.16%", GREEN], ["最低", "3.136", GREEN]],
  [["总量", "5365万", YELLOW], ["量比", "2.06", RED]],
  [["外盘", "1670万", RED], ["内盘", "3695万", GREEN]],
];
const navQuotes: [Cell, Cell][] = [
  [["IOPV", "3.1464", GREY], ["昨PV", "3.1470", GREY]],
  [["PV涨", "-0.02%", GREEN], ["换手", "11.39%", GREY]],
  [["溢价", "-0.0014", GREEN], ["溢率", "-0.04%", GREEN]],
];
const renderLabel = (s: string) => s.split(/([A-Z]+)/).map((t, i) => (/[A-Z]/.test(t) ? <b key={i}>{t}</b> : t));
const renderValue = (s: string) => (s.endsWith("万") ? <>{s.slice(0, -1)}<Wan>万</Wan></> : s);

const QuoteTable = ({ rows }: { rows: [Cell, Cell][] }) => (
  <Quotes>
    <tbody>
      {rows.map((pair) => (
        <tr key={pair[0][0]}>
          {pair.map(([label, value, color]) => (
            <React.Fragment key={label}>
              <th scope="row">{renderLabel(label)}</th>
              <Value $color={color}>{renderValue(value)}</Value>
            </React.Fragment>
          ))}
        </tr>
      ))}
    </tbody>
  </Quotes>
);

const indicators = "MACD DMI DMA FSL TRIX BRAR CR VR OBV ASI EMV VOL-TDX RSI WR SAR KDJ CCI ROC MTM BOLL PSY MCST 更多 设置".split(" ");
const miniLabels = "3.179 3.175 3.171 3.166 3.162 3.158 3.154 3.150 3.146 3.142 3.138 3.134 3.129 3.125 223.5万 191.6万 159.6万 127.7万 957869 638580 319290".split(" ");
const miniColor = (i: number) => (i < 7 ? "#d83232" : i === 7 ? "#d8d8d8" : i < 14 ? "#00b400" : "#a8a800");

export default function App() {
  return (
    <Page>
      <Global />
      <MenuBar>
        <MenuGroup $gap={33} $inset={24}>
          {["行情", "市场", "资讯", "数据", "发现", "问小达", "财富圈", "投教", "交易"].map((t) => <button key={t}>{t}</button>)}
        </MenuGroup>
        <Login><span>证券交易未登录</span><span>上证50ETF</span></Login>
        <MenuGroup $gap={21}>
          {["功能", "版面", "公式", "选项"].map((t) => <button key={t}>{t}</button>)}
        </MenuGroup>
        <MenuIcons>
          <button aria-label="客服">
            <svg width="17" height="17" viewBox="0 0 17 17" fill="none" stroke="#555" strokeWidth="1.5">
              <path d="M3 11A6 6 0 1 1 14 11M14 10C14 13 12 15 8.5 15.5M5.5 9.5C6.5 11.8 10.5 11.8 11.5 9.5" />
              <path d="M2 7v4M15 7v4" strokeWidth="2.4" />
            </svg>
          </button>
          <button aria-label="手机">
            <svg width="17" height="17" viewBox="0 0 17 17" fill="none" stroke="#444" strokeWidth="1.4">
              <rect x="3.5" y="1" width="10" height="15" rx="1.5" />
              <path d="M3.5 10.5h10M8.5 4v3M7.8 13.5h1.5" />
            </svg>
          </button>
          <button aria-label="邮件">
            <svg width="19" height="17" viewBox="0 0 19 17" fill="none" stroke="#444" strokeWidth="1.5">
              <path d="M4.5 6L5 3h13l-1.5 10H5M5 3l6 5.5L18 3M0 7.5h6M1.5 10.5h6" />
            </svg>
          </button>
        </MenuIcons>
        <Account>133****4595</Account>
        <Clock>21:49:29 周三</Clock>
        <WindowButtons>
          <button aria-label="后退"><ChevronLeft size={19} strokeWidth={2.6} /></button>
          <button aria-label="最小化"><Minus size={18} strokeWidth={3} /></button>
          <button aria-label="还原">
            <svg width="17" height="17" viewBox="0 0 17 17" fill="none" stroke="#222" strokeWidth="2">
              <path d="M2 6.5h8.5v8H2zM6 6V2h9v8.5h-4" />
            </svg>
          </button>
          <button aria-label="关闭"><X size={19} strokeWidth={2.4} /></button>
        </WindowButtons>
      </MenuBar>

      <Workspace>
        <Left>
          <Toolbar>
            <Periods>
              <ClippedButton>5分钟</ClippedButton>
              {["15分钟", "30分钟", "60分钟", "日线", "周线", "月线", "10分钟", "45日线", "季线", "年线", "5秒", "15秒", "多周期"].map((t) => (
                <TextButton key={t} $color={t === "日线" ? CYAN : undefined}>{t}</TextButton>
              ))}
              <TextButton>更多 〉</TextButton>
            </Periods>
            <Tools>
              {["复权", "叠加", "多股", "统计", "画线", "F10", "标记", "-自选", "返回"].map((t) => <Tool key={t}>{t}</Tool>)}
            </Tools>
          </Toolbar>

          <Pane $h={560}>
            <Plot>
              <Legend $h={24}>
                <LegendItem $color={GREY} $clip={18}>(日线,前复权)</LegendItem>
                <Fold aria-label="展开"><ChevronDown size={12} strokeWidth={3} /></Fold>
                <LegendItem $color="#e0e0e0">MA20: 3.159<Arrow up /></LegendItem>
                <LegendItem $color="#e0e000">MA120: 3.034<Arrow up /></LegendItem>
                <LegendItem $color={MAGENTA}>MA250: 2.842<Arrow up /></LegendItem>
                <LegendItem $color={GREEN}>MA60: 3.100<Arrow up /></LegendItem>
                <LegendTools>
                  <button aria-label="标记"><Diamond size={15} strokeWidth={1.5} /></button>
                  <button aria-label="侧栏">
                    <svg width="16" height="15" viewBox="0 0 16 15" fill="none" stroke="#888" strokeWidth="1.5">
                      <rect x="1" y="1" width="14" height="13" rx="1.5" />
                      <rect x="9" y="3.5" width="3.5" height="8" fill="#888" stroke="none" />
                    </svg>
                  </button>
                </LegendTools>
              </Legend>
              <Drawing $h={534} viewBox="0 78 1417 534" preserveAspectRatio="none" role="img" aria-label="日K线">
                <Grid top={78} bottom={594} rows={[113, 173, 233, 293, 353, 413, 473, 534, 594]} />
                <path d="M618 364.5H1417M300 454.5H1417" stroke="#909090" strokeWidth="1.3" />
                {candles.map((candle, n) => <CandleMark key={n} candle={candle} n={n} />)}
                <Curve points={ma250} color={MAGENTA} />
                <Curve points={ma120} color="#e0e000" />
                <Curve points={ma60} color={GREEN} />
                <Curve points={ma20} color="#e8e8e8" />
                <path d="M1330 85L1355 79.5M1348 77L1355 79.5L1349 85M202 588H189M195 583L188 588L195 593" stroke="#c8c8c8" fill="none" />
              </Drawing>
              <Note $x={1289} $y={22}>3.256</Note>
              <Note $x={619} $y={313}>2.780 - 2.782</Note>
              <Note $x={303} $y={403}>2.630 - 2.635</Note>
              <Note $x={204} $y={525}>2.410</Note>
              <Note $x={1245} $y={542} $color="#f00000" $small>Ŝ</Note>
            </Plot>
            <Axis $top={30}>
              {["3.200", "3.100", "3.000", "2.900", "2.800", "2.700", "2.600", "2.500", "2.400"].map((t) => (
                <AxisLabel key={t} $h={60}>{t}</AxisLabel>
              ))}
            </Axis>
          </Pane>

          <Pane $h={236}>
            <Plot>
              <Legend $h={23}>
                <LegendItem $color="#e0e0e0" $clip={63}>DIF: 0.021<Arrow /></LegendItem>
                <LegendItem $color="#e0e000">DEA: 0.028<Arrow /></LegendItem>
                <LegendItem $color={MAGENTA}>MACD: -0.015<Arrow /></LegendItem>
              </Legend>
              <Drawing $h={212} viewBox="0 637 1417 212" preserveAspectRatio="none" role="img" aria-label="MACD">
                <Grid top={637} bottom={849} rows={[680, 723]} />
                <line x1="0" x2="1417" y1="766.5" y2="766.5" stroke="#c00000" strokeDasharray="1 1.5" />
                {macdEnds.map((y, n) => (
                  <rect key={n} x={Math.round(barX(n))} y={Math.min(y, 766.5)} width="1" height={Math.abs(y - 766.5)} fill={y < 766.5 ? RED : CYAN} />
                ))}
                <Curve points={dif} color="#e8e8e8" />
                <Curve points={dea} color="#e0e000" />
              </Drawing>
            </Plot>
            <Axis $top={2}>
              {["0.060", "0.040", "0.020", "0.000"].map((t) => <AxisLabel key={t} $h={43}>{t}</AxisLabel>)}
            </Axis>
          </Pane>

          <Pane $h={110}>
            <Plot>
              <Legend $h={23}>
                <LegendItem $color="#e0e0e0" $clip={65}>RSI1: 33.335<Arrow /></LegendItem>
                <LegendItem $color="#e0e000">RSI2: 48.930<Arrow /></LegendItem>
                <LegendItem $color={MAGENTA}>RSI3: 54.008<Arrow /></LegendItem>
              </Legend>
              <Drawing $h={86} viewBox="0 873 1417 86" preserveAspectRatio="none" role="img" aria-label="RSI">
                <Grid top={874} bottom={956} rows={[885, 916, 946]} />
                <Curve points={rsi1} color="#e8e8e8" />
                <Curve points={rsi2} color="#e0e000" />
                <Curve points={rsi3} color={MAGENTA} />
              </Drawing>
            </Plot>
            <Axis $top={5}>
              <AxisLabel $h={20} $plain>100.00</AxisLabel>
              <AxisLabel $h={22} $plain>80.00</AxisLabel>
              <AxisLabel $h={40} $plain>50.00</AxisLabel>
              <AxisLabel $h={20} $plain>20.00</AxisLabel>
            </Axis>
          </Pane>

          <Pane $h={88}>
            <Plot>
              <Legend $h={22}>
                <LegendItem $color="#e0e0e0" $clip={131}>VOLUME: 53658764<Arrow up /></LegendItem>
                <LegendItem $color="#e0e0e0">MA5: 34415428<Arrow up /></LegendItem>
                <LegendItem $color="#e0e000">MA20: 13747486<Arrow up /></LegendItem>
              </Legend>
              <Drawing $h={64} viewBox="0 982 1417 64" preserveAspectRatio="none" role="img" aria-label="成交量">
                <Grid top={984} bottom={1046} rows={[988, 1017]} />
                {candles.map((c, n) => <VolumeMark key={n} kind={c.kind} height={volumes[n]} n={n} />)}
                <Curve points={volMa5} color="#e8e8e8" />
                <Curve points={volMa20} color="#e8e800" />
              </Drawing>
            </Plot>
            <Axis $top={12} $boxed>
              <AxisLabel $h={29}>50000</AxisLabel>
              <AxisLabel $h={28} $plain>25000</AxisLabel>
              <Unit>X1000</Unit>
            </Axis>
          </Pane>

          <TimeRow>
            <Months>
              <Month $open />
              {["3", "4", "5", "6", "7", "8", "9", "10", "11", "12", "1"].map((m) => <Month key={m}>{m}</Month>)}
            </Months>
            <AxisCell>日线</AxisCell>
          </TimeRow>

          <TabRow $h={21}>
            <Tab $clip={13}>窗口</Tab>
            {indicators.map((t) => <Tab key={t} $color={t === "VOL-TDX" ? CYAN : undefined}>{t}</Tab>)}
            <TabsRight>
              <Tab $color={GREY}>指标B</Tab>
              <Tab $wide>模 板</Tab>
            </TabsRight>
            <AxisCell><Zoom>+</Zoom><Zoom>−</Zoom></AxisCell>
          </TabRow>
          <TabRow $h={23}>
            <QuoteTab $clip={27}>关联报价</QuoteTab>
            <QuoteTab $color={YELLOW}>财富圈</QuoteTab>
            <QuoteTab $color={YELLOW}>产品概要</QuoteTab>
            <QuoteTab>基金持仓</QuoteTab>
            <TabsRight>
              <Tab>普及版功能说明</Tab>
              <Tab $color={YELLOW}>图文F10</Tab>
            </TabsRight>
            <AxisCell />
          </TabRow>
        </Left>

        <Side>
          <Title><sup>R</sup><b>510050</b><span>上证</span>50ETF</Title>
          <Block $pad="7px 0 0" $h={136}><BookTable rows={asks} /></Block>
          <Block $pad="3px 0 0" $h={132}><BookTable rows={bids} /></Block>
          <Block $pad="0" $h={121}><QuoteTable rows={dayQuotes} /></Block>
          <Block $pad="0" $h={76}><QuoteTable rows={navQuotes} /></Block>
          <MiniTitle><button>上证50ETF</button><button>上证50</button></MiniTitle>
          <Mini>
            <MiniPlot><MiniChart /></MiniPlot>
            <MiniScale>
              {miniLabels.map((t, i) => <MiniLabel key={t} $color={miniColor(i)}>{t}</MiniLabel>)}
            </MiniScale>
          </Mini>
          <SideTabs>
            {["笔", "价", "细", "势", "联", "值", "主", "逆", "筹"].map((t) => <SideTab key={t} $on={t === "势"}>{t}</SideTab>)}
          </SideTabs>
        </Side>
      </Workspace>

      <Status>
        <Fields>
          <Field $w={58} $up>0.08%</Field>
          <Field $w={73}>11802亿</Field>
          <Field $w={38}>深证</Field>
          <Field $w={66} $up>14255.13</Field>
          <Field $w={54} $up>99.50</Field>
          <Field $w={57} $up>0.70%</Field>
          <Field $w={73}>14205亿</Field>
          <Field $w={38}>北证</Field>
          <Field $w={57} $up>1519.75</Field>
          <Field $w={59} $up>2.15</Field>
          <Field $w={59} $up>0.14%</Field>
          <Field $w={70}>233.0亿</Field>
          <Field $w={41}>创业</Field>
          <Field $w={59} $up>3295.52</Field>
          <Field $w={62} $up>17.54</Field>
          <Field $w={57} $up>0.54%</Field>
          <Field $w={65}>6561亿</Field>
        </Fields>
        <Divided><Field $w={45} $left>总成交</Field><Field $w={78}>26240亿</Field></Divided>
        <Divided>上海双线主站12</Divided>
        <StatusRight>
          <SearchBox><Search size={14} /><input aria-label="搜索" /></SearchBox>
          <button aria-label="升级">
            <svg width="16" height="16" viewBox="0 0 16 16">
              <rect x="0.5" y="0.5" width="15" height="15" rx="4" fill="#e0dc30" stroke="#a09a18" />
              <path d="M8 3l4 4H9.5v2h-3V7H4zM6.5 10h3v1h-3zM6.5 12h3v1h-3z" fill="#7a7410" />
            </svg>
          </button>
          <button aria-label="信号"><SatelliteDish size={15} fill="#777" /></button>
          <button aria-label="网络">
            <svg width="10" height="16" viewBox="0 0 10 16" fill="#707070"><path d="M5 0l4 4H1zM5 4l5 5H0zM5 8l5 5H0zM4 12h2v4H4z" /></svg>
          </button>
          <button aria-label="提示">
            <svg width="5" height="14" viewBox="0 0 5 14" fill="#707070"><path d="M2.5 0L5 3 3.2 8H1.8L0 3zM2 9h1v2H2zM2 12h1v2H2z" /></svg>
          </button>
        </StatusRight>
      </Status>
      <Desktop />
    </Page>
  );
}
